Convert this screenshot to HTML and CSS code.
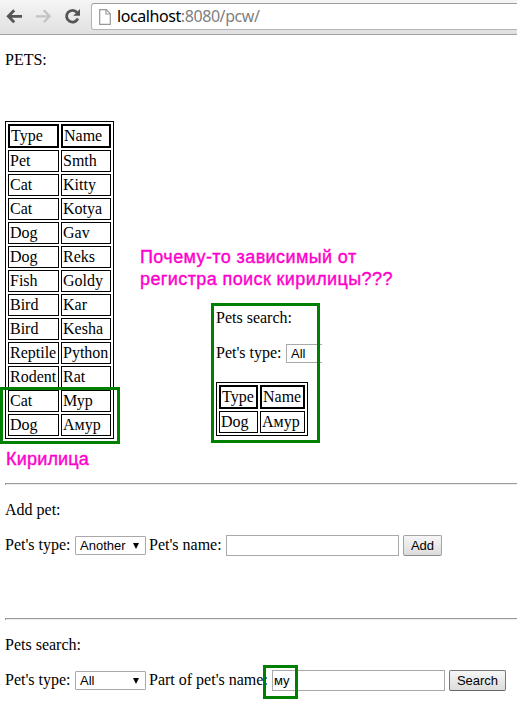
FILE: index.html
```html
<!DOCTYPE html>
<html lang="ru">
<head>
<meta charset="utf-8">
<title>Pets</title>
<link rel="stylesheet" href="styles.css">
</head>
<body>
<header class="toolbar">
  <svg class="nav" width="84" height="34" viewBox="0 0 84 34">
    <g fill="none" stroke="#555" stroke-width="2.8">
      <path d="M22 16.3H9M14.2 10.3L8.3 16.3l5.9 6"/>
      <path stroke="#c3c3c3" stroke-width="2.3" d="M36 16.3h13M43.8 10.3l5.9 6-5.9 6"/>
      <path d="M77 12.4A5.9 5.9 0 1 0 77.9 18.5"/>
    </g>
    <path fill="#555" d="M80 9v6.8h-6.8z"/>
  </svg>
  <div class="address">
    <svg class="doc" width="12" height="16" viewBox="0 0 12 16"><path d="M.7.7h6.6l4 4v10.600H.7zM7 .7v4.300h4.300" fill="#fff" stroke="#999" stroke-width="1.2"/></svg>
    <span class="url">localhost<span class="path">:8080/pcw/</span></span>
  </div>
</header>
<main class="page">
  <p>PETS:</p>
  <table class="pets main-table">
    <tr><th>Type</th><th>Name</th></tr>
    <tr><td>Pet</td><td>Smth</td></tr>
    <tr><td>Cat</td><td>Kitty</td></tr>
    <tr><td>Cat</td><td>Kotya</td></tr>
    <tr><td>Dog</td><td>Gav</td></tr>
    <tr><td>Dog</td><td>Reks</td></tr>
    <tr><td>Fish</td><td>Goldy</td></tr>
    <tr><td>Bird</td><td>Kar</td></tr>
    <tr><td>Bird</td><td>Kesha</td></tr>
    <tr><td>Reptile</td><td>Python</td></tr>
    <tr><td>Rodent</td><td>Rat</td></tr>
    <tr><td>Cat</td><td>Мур</td></tr>
    <tr><td>Dog</td><td>Амур</td></tr>
  </table>
  <hr class="rule">
  <p>Add pet:</p>
  <div class="form">
    <span class="label type-label">Pet's type:</span><span class="select">Another<i class="arrow"></i></span><span class="label name-label">Pet's name:</span><span class="input"></span><span class="button add">Add</span>
  </div>
  <hr class="rule second">
  <p>Pets search:</p>
  <div class="form">
    <span class="label type-label">Pet's type:</span><span class="select">All<i class="arrow"></i></span><span class="label part-label">Part of pet's name:</span><span class="input">му</span><span class="button search">Search</span>
  </div>
</main>
<div class="mark mark-rows"></div>
<div class="note note-rows">Кирилица</div>
<div class="note note-question">Почему-то зависимый от<br>регистра поиск кирилицы???</div>
<section class="result">
  <p>Pets search:</p>
  <div class="form">
    <span class="label type-label">Pet's type:</span><span class="select cut">All</span>
  </div>
  <table class="pets result-table">
    <tr><th>Type</th><th>Name</th></tr>
    <tr><td>Dog</td><td>Амур</td></tr>
  </table>
</section>
<div class="mark mark-result"></div>
<div class="mark mark-input"></div>
</body>
</html>
```
FILE: styles.css
```css
* { box-sizing: border-box; }
body {
  margin: 0;
  position: relative;
  height: 724px;
  overflow: hidden;
  background: #fff;
  color: #000;
  font: 16px/18px "Liberation Serif", "Times New Roman", serif;
}
.toolbar {
  display: flex;
  height: 35px;
  background: linear-gradient(#f5f5f5, #e0e0e0);
  border-bottom: 1px solid #a2a2a2;
}
.nav { flex: none; }
.address {
  display: flex;
  flex: none;
  align-items: center;
  width: 440px;
  height: 27px;
  margin: 3px 0 0 7px;
  padding-left: 7px;
  background: #fff;
  border: 1px solid #b3b3b3;
  border-top-color: #9d9d9d;
  border-radius: 3px;
}
.doc { flex: none; margin-right: 6px; }
.url {
  height: 23px;
  font: 16px/22px "Noto Sans", "Open Sans", sans-serif;
  letter-spacing: -0.42px;
}
.path { color: #808080; }
.page { padding: 16px 0 0 5px; }
p { margin: 0; height: 18px; }
.pets {
  border: 1px solid #000;
  border-spacing: 2px;
  table-layout: fixed;
}
.pets th, .pets td {
  padding: 1px;
  border: 1px solid #000;
  text-align: left;
  font-weight: normal;
  white-space: nowrap;
}
.pets th { border-width: 2px; }
.main-table { width: 109px; margin-top: 52px; }
.main-table th:first-child { width: 51px; }
.rule {
  height: 2px;
  margin: 44px 0 16px;
  border: 0;
  border-top: 1px solid #9a9a9a;
  border-left: 1px solid #9a9a9a;
  background: #eee;
}
.rule.second { margin-top: 62px; }
.form {
  display: flex;
  align-items: center;
  height: 21px;
  margin-top: 16px;
  white-space: nowrap;
}
.label { height: 20px; }
.type-label { width: 70px; }
.name-label { width: 77px; margin-left: 3px; }
.part-label { width: 123px; margin-left: 3px; }
.select, .input, .button {
  font: 13.333px/17px "Liberation Sans", Arial, sans-serif;
  border: 1px solid #a9a9a9;
}
.select {
  display: flex;
  justify-content: space-between;
  align-items: center;
  width: 71px;
  height: 19px;
  padding: 0 6px 0 4px;
  border-radius: 1px;
  font-size: 13px;
}
.arrow {
  border: 3px solid transparent;
  border-top: 6px solid #000;
  border-bottom: 0;
}
.input {
  width: 173px;
  height: 21px;
  padding: 1px;
  font-size: 13px;
}
.button {
  height: 21px;
  margin-left: 4px;
  line-height: 19px;
  text-align: center;
  background: linear-gradient(#f6f6f6, #dcdcdc);
  border-color: #a4a4a4 #a4a4a4 #8b8b8b;
  border-radius: 2px;
  font-size: 13px;
}
.add { width: 39px; }
.search { width: 57px; border-color: #777 #777 #666; }
.mark { position: absolute; border: 3px solid #008000; }
.mark-rows { left: 0; top: 387px; width: 120px; height: 57px; }
.mark-result { left: 211px; top: 303px; width: 109px; height: 140px; }
.mark-input { left: 263px; top: 665px; width: 35px; height: 34px; }
.note {
  position: absolute;
  color: #ff00cc;
  font: 18px/22px "Liberation Sans", Arial, sans-serif;
  -webkit-text-stroke: 0.4px #ff00cc;
  letter-spacing: 0.4px;
  white-space: nowrap;
}
.note-rows { left: 6px; top: 448px; letter-spacing: 0.2px; }
.note-question { left: 140px; top: 246px; }
.result {
  position: absolute;
  left: 216px;
  top: 309px;
  width: 106px;
}
.cut { width: 36px; border-right: 0; border-radius: 1px 0 0 1px; }
.result-table { width: 92px; margin-top: 18px; }
.result-table th:first-child { width: 39px; }
```
